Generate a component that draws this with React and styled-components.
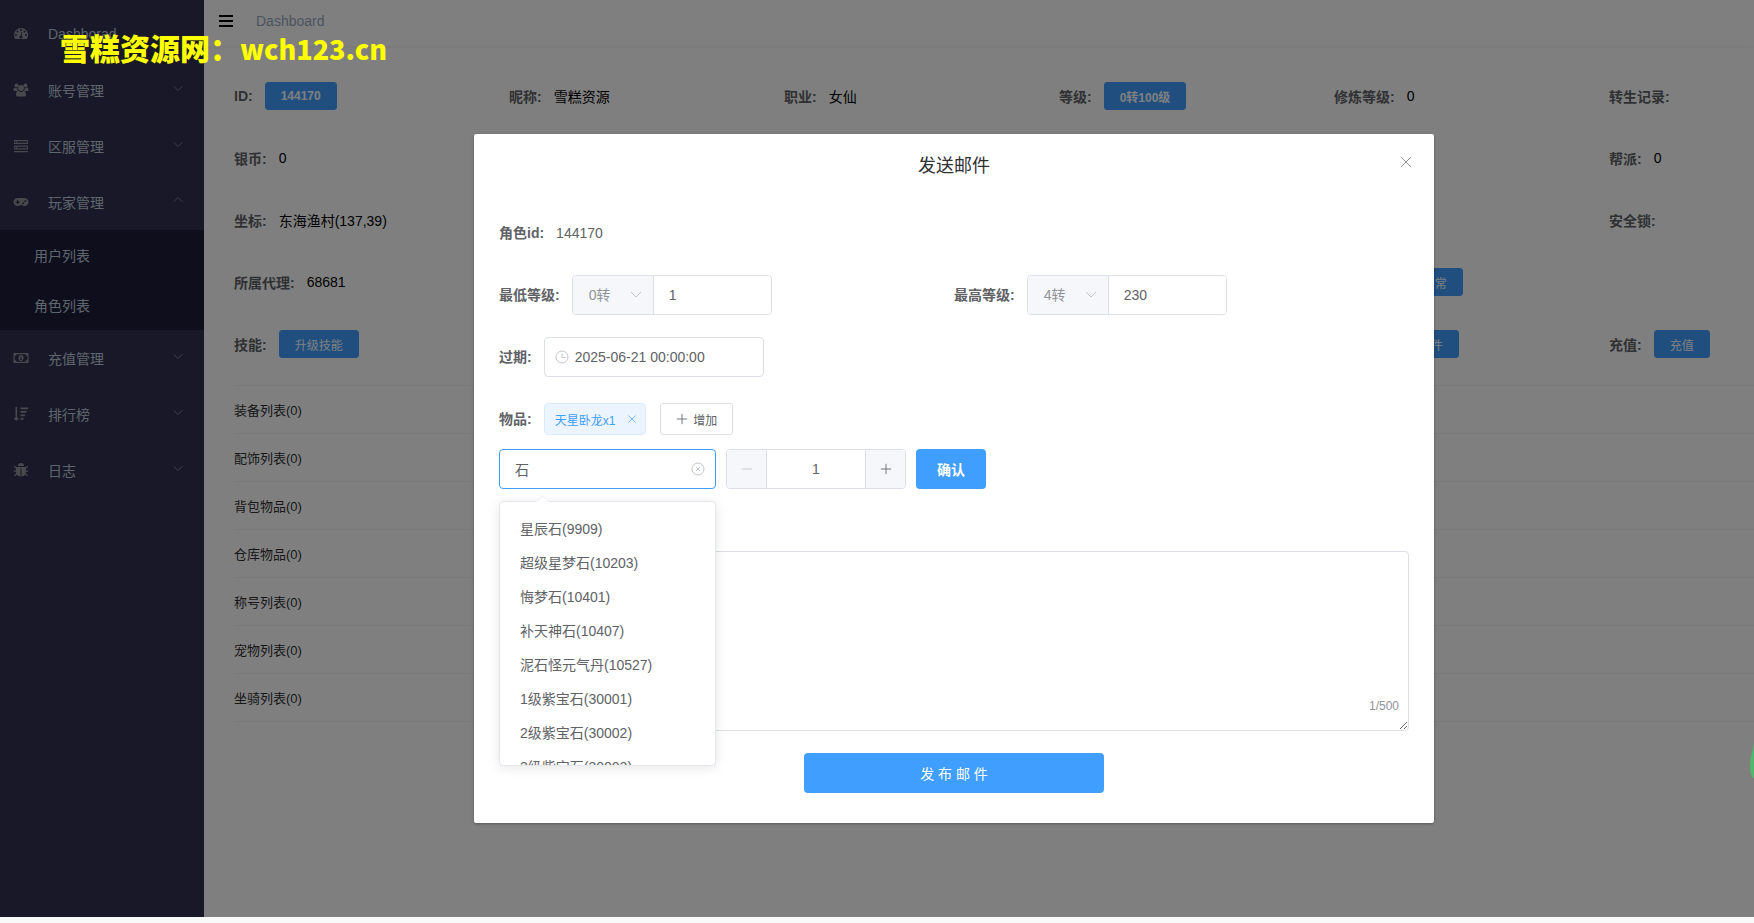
import { useState } from "react";
import styled, { createGlobalStyle } from "styled-components";

const GlobalStyle = createGlobalStyle`
  *,
  *::before,
  *::after {
    box-sizing: border-box;
  }

  body {
    margin: 0;
    background: #f9f9f9;
    font-family: "Liberation Sans", "Noto Sans CJK SC", sans-serif;
    font-size: 14px;
    color: #000000;
  }

  button,
  input,
  select,
  textarea {
    font-family: inherit;
  }
`;

const Page = styled.div`
  position: relative;
  display: flex;
  min-height: 100vh;
  border-bottom: 6px solid #f9f9f9;
  overflow: hidden;
`;

/* ---------- sidebar ---------- */

const Sidebar = styled.nav`
  flex: 0 0 204px;
  padding-top: 6px;
  background: #303050;
`;

const MenuItem = styled.a`
  display: flex;
  align-items: center;
  height: 56px;
  padding: 0 20px 0 13px;
  color: #bfcbd9;
  text-decoration: none;

  span {
    flex: 1;
    margin-left: 19px;
  }
`;

const MenuIconSvg = styled.svg`
  width: 16px;
  height: 16px;
  fill: #909399;
`;

const MenuArrow = styled.div`
  display: flex;
  padding-bottom: 4px;
  color: #8a8fa3;
`;

const SubMenu = styled.div`
  background: #1c1c3a;
`;

const SubMenuItem = styled.a`
  display: flex;
  align-items: center;
  height: 50px;
  padding-left: 34px;
  color: #bfcbd9;
  text-decoration: none;
`;

/* ---------- content ---------- */

const Main = styled.main`
  flex: 1;
  min-width: 0;
  background: #ffffff;
`;

const Header = styled.header`
  display: flex;
  align-items: center;
  gap: 22px;
  height: 46px;
  padding: 0 14px 5px;
  box-shadow: 0 1px 4px rgba(0, 21, 41, 0.06);
`;

const HamburgerButton = styled.button`
  display: flex;
  padding: 0;
  border: 0;
  background: none;
  color: #000000;
`;

const Breadcrumb = styled.a`
  color: #97a8be;
  line-height: 40px;
  text-decoration: none;
`;

const Content = styled.div`
  padding: 30px 0 0 30px;
`;

const InfoGrid = styled.dl`
  display: grid;
  grid-template-columns: repeat(5, 275fr) 145fr;
  grid-auto-rows: 40px;
  row-gap: 22px;
  margin: 0 0 21px;
`;

const InfoCell = styled.div`
  grid-column: ${(props) => props.$col};
  grid-row: ${(props) => props.$row};
  display: flex;
  align-items: center;
  min-width: 0;
  white-space: nowrap;

  dt {
    padding-right: 12px;
    font-weight: 700;
    color: #606266;
  }

  dd {
    display: flex;
    margin: 0;
  }
`;

const MiniButton = styled.button`
  height: 28px;
  padding: 0 15px;
  border: 1px solid #409eff;
  border-radius: 3px;
  background: #409eff;
  color: #ffffff;
  font-size: 12px;
  font-weight: ${(props) => (props.$bold ? 700 : 400)};
`;

const Collapse = styled.div`
  border-top: 1px solid #f1f3f8;
`;

const CollapseHeader = styled.button`
  display: block;
  width: 100%;
  height: 48px;
  padding: 0;
  border: 0;
  border-bottom: 1px solid #f1f3f8;
  background: none;
  color: #303133;
  font-size: 13px;
  text-align: left;
`;

/* ---------- dialog ---------- */

const Overlay = styled.div`
  position: absolute;
  inset: 0;
  display: flex;
  justify-content: center;
  align-items: flex-start;
  padding: 134px 24px 0 178px;
  background: rgba(0, 0, 0, 0.5);
`;

const DialogBox = styled.section`
  width: 100%;
  max-width: 960px;
  border-radius: 2px;
  background: #ffffff;
  box-shadow: 0 1px 3px rgba(0, 0, 0, 0.3);
`;

const DialogHeader = styled.header`
  position: relative;
  padding: 20px 20px 10px;
  text-align: center;
`;

const DialogTitle = styled.h2`
  margin: 0;
  font-size: 18px;
  font-weight: 400;
  line-height: 24px;
  color: #303133;
`;

const DialogClose = styled.button`
  position: absolute;
  top: 21px;
  right: 21px;
  display: flex;
  padding: 0;
  border: 0;
  background: none;
  color: #909399;
`;

const DialogForm = styled.form`
  padding: 25px 25px 30px;
  color: #606266;
`;

const FormRow = styled.div`
  display: grid;
  grid-template-columns: ${(props) => (props.$two ? "1fr 1fr" : "1fr")};
  margin-bottom: 22px;
`;

const FormItem = styled.div`
  display: flex;
  align-items: center;
  height: 40px;
`;

const FormLabel = styled.label`
  padding-right: 12px;
  font-weight: 700;
  line-height: 40px;
  white-space: nowrap;
`;

const LevelGroup = styled.div`
  display: flex;
  width: 200px;
  height: 40px;
  border: 1px solid #dcdfe6;
  border-radius: 4px;
  overflow: hidden;
`;

const SelectWrap = styled.div`
  position: relative;
  flex: 0 0 81px;
  border-right: 1px solid #dcdfe6;
  background: #f5f7fa;
  color: #c0c4cc;

  svg {
    position: absolute;
    top: 11px;
    right: 10px;
    pointer-events: none;
  }
`;

const LevelSelect = styled.select`
  width: 100%;
  height: 100%;
  padding: 0 16px;
  border: 0;
  outline: 0;
  appearance: none;
  background: transparent;
  color: #909399;
  font-size: 14px;
`;

const LevelInput = styled.input`
  flex: 1;
  min-width: 0;
  padding: 0 15px;
  border: 0;
  outline: 0;
  color: #606266;
  font-size: 14px;
`;

const IconInput = styled.div`
  display: flex;
  align-items: center;
  gap: 6px;
  width: ${(props) => props.$width}px;
  height: 40px;
  padding: 0 10px;
  border: 1px solid ${(props) => (props.$active ? "#409eff" : "#dcdfe6")};
  border-radius: 4px;
  color: #c0c4cc;

  input {
    flex: 1;
    min-width: 0;
    padding: 0 0 0 ${(props) => (props.$active ? 5 : 0)}px;
    border: 0;
    outline: 0;
    background: none;
    color: #606266;
    font-size: 14px;
  }

  button {
    display: flex;
    padding: 0;
    border: 0;
    background: none;
    color: inherit;
  }
`;

const Tag = styled.span`
  display: flex;
  align-items: center;
  gap: 12px;
  height: 32px;
  margin-right: 14px;
  padding: 0 8px 0 10px;
  border: 1px solid #d9ecff;
  border-radius: 4px;
  background: #ecf5ff;
  color: #409eff;
  font-size: 12px;

  button {
    display: flex;
    padding: 0;
    border: 0;
    background: none;
    color: inherit;
  }
`;

const AddButton = styled.button`
  display: flex;
  align-items: center;
  gap: 5px;
  height: 32px;
  padding: 0 15px;
  border: 1px solid #dcdfe6;
  border-radius: 3px;
  background: #ffffff;
  color: #606266;
  font-size: 12px;
`;

const PickerRow = styled.div`
  position: relative;
  display: flex;
  gap: 10px;
  margin: -12px 0 22px;
`;

const NumberInput = styled.div`
  display: flex;
  width: 180px;
  height: 40px;
  border: 1px solid #dcdfe6;
  border-radius: 4px;
  overflow: hidden;

  input {
    flex: 1;
    min-width: 0;
    padding: 0;
    border: 0;
    outline: 0;
    color: #606266;
    font-size: 14px;
    text-align: center;
  }
`;

const StepButton = styled.button`
  display: flex;
  flex: 0 0 40px;
  align-items: center;
  justify-content: center;
  padding: 0;
  border: 0 solid #dcdfe6;
  border-width: ${(props) => (props.$side === "left" ? "0 1px 0 0" : "0 0 0 1px")};
  background: #f5f7fa;
  color: #606266;

  &:disabled {
    color: #c0c4cc;
  }
`;

const PrimaryButton = styled.button`
  display: block;
  width: ${(props) => props.$width}px;
  height: 40px;
  padding: 0;
  border: 0;
  border-radius: 4px;
  background: #409eff;
  color: #ffffff;
  font-size: 14px;
  font-weight: ${(props) => (props.$bold ? 700 : 400)};
`;

const Suggestions = styled.div`
  position: absolute;
  z-index: 2;
  top: 52px;
  left: 0;
  width: 217px;
  height: 265px;
  border: 1px solid #e4e7ed;
  border-radius: 4px;
  background: #ffffff;
  box-shadow: 0 2px 12px rgba(0, 0, 0, 0.1);

  &::before {
    content: "";
    position: absolute;
    top: -5px;
    left: 38px;
    width: 9px;
    height: 9px;
    background: #ffffff;
    border: 1px solid #ebeef5;
    border-right-color: transparent;
    border-bottom-color: transparent;
    transform: rotate(45deg);
  }

  ul {
    height: 100%;
    margin: 0;
    padding: 10px 0;
    list-style: none;
    overflow: hidden;
  }

  li {
    padding: 0 20px;
    line-height: 34px;
  }
`;

const TextareaWrap = styled.div`
  position: relative;
  height: 180px;
  margin-bottom: 22px;

  textarea {
    display: block;
    width: 100%;
    height: 100%;
    padding: 5px 15px;
    border: 1px solid #dcdfe6;
    border-radius: 4px;
    outline: 0;
    resize: vertical;
    color: #606266;
    font-size: 14px;
    line-height: 21px;
  }

  span {
    position: absolute;
    right: 10px;
    bottom: 16px;
    font-size: 12px;
    line-height: 18px;
    color: #909399;
  }
`;

const Actions = styled.div`
  display: flex;
  justify-content: center;
`;

const Watermark = styled.div`
  position: absolute;
  top: 26px;
  left: 60px;
  color: #ffff00;
  font-family: "Noto Sans CJK SC", sans-serif;
  font-size: 30px;
  font-weight: 900;
  line-height: 42px;
  white-space: nowrap;

  span {
    font-size: 27px;
  }
`;

const FloatBall = styled.svg`
  position: absolute;
  right: 0;
  top: 740px;
  width: 4px;
  height: 38px;
  fill: #50b869;
`;

/* ---------- icons ---------- */

const lineIcons = {
  down: "M2 5l5 5 5-5",
  up: "M2 9l5-5 5 5",
  close: "M2 2l10 10M12 2L2 12",
  plus: "M1 7h12M7 1v12",
  minus: "M1 7h12",
  clock: "M7 1a6 6 0 1 0 0 12a6 6 0 1 0 0-12M7 3.500v4h3.500",
  clear: "M7 1a6 6 0 1 0 0 12a6 6 0 1 0 0-12M5 5l4 4M9 5l-4 4",
};

const LineIcon = ({ name, size = 14 }) => (
  <svg
    width={size}
    height={size}
    viewBox="0 0 14 14"
    fill="none"
    stroke="currentColor"
    strokeWidth="1"
    aria-hidden="true"
  >
    <path d={lineIcons[name]} />
  </svg>
);

const menuIcons = {
  dashboard:
    "M8 2a7 7 0 0 0-7 7c0 1.500.4 2.700 1.100 3.800.2.200.4.200.6.200h10.600c.2 0 .4 0 .6-.2A7 7 0 0 0 8 2zM3 10a1 1 0 1 1 0-2 1 1 0 0 1 0 2zm1.500-3.500a1 1 0 1 1 0-2 1 1 0 0 1 0 2zM8 5a1 1 0 1 1 0-2 1 1 0 0 1 0 2zm1.300 5.500a1.500 1.500 0 1 1-1.600-1l.9-3.600.8.200-.9 3.600c.4.200.7.400.8.800zM11.500 6.500a1 1 0 1 1 0-2 1 1 0 0 1 0 2zM13 10a1 1 0 1 1 0-2 1 1 0 0 1 0 2z",
  users:
    "M3.500 1.500a2 2 0 1 1 0 4 2 2 0 0 1 0-4zM12.500 1.500a2 2 0 1 1 0 4 2 2 0 0 1 0-4zM8 3a3 3 0 1 1 0 6 3 3 0 0 1 0-6zM.5 8.500c0-1.500.3-3 1.300-3 .5.5 1.500.8 2.500.5-.2 1.300.2 2.300.8 3H1.700c-.7 0-1.200-.2-1.200-.5zM15.500 8.500c0-1.500-.3-3-1.300-3-.5.5-1.500.8-2.500.5.2 1.300-.2 2.300-.8 3h3.400c.7 0 1.200-.2 1.200-.5zM3 13c0-2.300.6-4.300 2.300-4.300C7 10.300 9 10.300 10.700 8.700 12.400 8.700 13 10.700 13 13c0 1-.7 1.500-1.600 1.500H4.600C3.700 14.500 3 14 3 13z",
  server:
    "M1 2h14v1.200H1zM1 4.800h14V6H1zM1 7.500h14v1.200H1zM1 10.200h14v1.200H1zM1 13h14v1.200H1zM1 3h1v2H1zM14 3h1v2h-1zM3 3h1v2H3zM1 8.500h1v2H1zM3 8.500h1v2H3zM14 8.500h1v2h-1z",
  gamepad:
    "M4.500 4a4 4 0 1 0 2.700 7h1.600a4 4 0 1 0 2.700-7zM4 6h1.200v1.500h1.500v1.200H5.200v1.500H4V8.700H2.500V7.500H4zM10.200 8.200a1 1 0 1 1 0 2 1 1 0 0 1 0-2zM12.300 6a1 1 0 1 1 0 2 1 1 0 0 1 0-2z",
  money:
    "M.5 3h15v10H.5zM3.500 4.200A2 2 0 0 1 1.700 6v4a2 2 0 0 1 1.800 1.800h9A2 2 0 0 1 14.300 10V6a2 2 0 0 1-1.800-1.800zM8 5c1.600 0 2.500 1.400 2.500 3S9.600 11 8 11 5.500 9.600 5.500 8 6.400 5 8 5zM7 6.500v.8h.6v1.900H7v.7h2v-.7h-.6V6.500z",
  sort:
    "M2.500 1h1.600v11h1.900L3.300 15 .6 12h1.900zM7.500 1.500H15v1.700H7.500zM7.500 5h6v1.700h-6zM7.500 8.500H12v1.700H7.500zM7.500 12h3v1.700h-3z",
  bug:
    "M5 4a3 3 0 0 1 6 0zM3.500 5h9c.2 0 .3.100.4.200l1.600-1.600.8.800L13 6.700v1.800h2.200v1.200H13c0 .6-.1 1.100-.3 1.600l2.300 2.300-.8.800-2-2c-.9 1.100-2.200 1.900-3.700 2.100V6.500h-1v8c-1.500-.2-2.800-1-3.700-2.100l-2 2-.8-.8 2.300-2.300C3.100 10.800 3 10.300 3 9.700H.8V8.500H3V6.700L.7 4.400l.8-.8 1.600 1.600c.1-.1.200-.2.400-.2z",
};

const MenuIcon = ({ name }) => (
  <MenuIconSvg viewBox="0 0 16 16" fillRule="evenodd" aria-hidden="true">
    <path d={menuIcons[name]} />
  </MenuIconSvg>
);

/* ---------- data ---------- */

const menu = [
  { icon: "dashboard", title: "Dashborad" },
  { icon: "users", title: "账号管理", arrow: "down" },
  { icon: "server", title: "区服管理", arrow: "down" },
  {
    icon: "gamepad",
    title: "玩家管理",
    arrow: "up",
    children: ["用户列表", "角色列表"],
  },
  { icon: "money", title: "充值管理", arrow: "down" },
  { icon: "sort", title: "排行榜", arrow: "down" },
  { icon: "bug", title: "日志", arrow: "down" },
];

const info = [
  { row: 1, col: 1, label: "ID", button: "144170", bold: true },
  { row: 1, col: 2, label: "昵称", value: "雪糕资源" },
  { row: 1, col: 3, label: "职业", value: "女仙" },
  { row: 1, col: 4, label: "等级", button: "0转100级", bold: true },
  { row: 1, col: 5, label: "修炼等级", value: "0" },
  { row: 1, col: 6, label: "转生记录" },
  { row: 2, col: 1, label: "银币", value: "0" },
  { row: 2, col: 6, label: "帮派", value: "0" },
  { row: 3, col: 1, label: "坐标", value: "东海渔村(137,39)" },
  { row: 3, col: 6, label: "安全锁" },
  { row: 4, col: 1, label: "所属代理", value: "68681" },
  { row: 4, col: 5, label: "账号状态", button: "正常" },
  { row: 5, col: 1, label: "技能", button: "升级技能" },
  { row: 5, col: 5, label: "邮件", button: "发送邮件" },
  { row: 5, col: 6, label: "充值", button: "充值" },
];

const lists = [
  "装备列表(0)",
  "配饰列表(0)",
  "背包物品(0)",
  "仓库物品(0)",
  "称号列表(0)",
  "宠物列表(0)",
  "坐骑列表(0)",
];

const suggestions = [
  "星辰石(9909)",
  "超级星梦石(10203)",
  "悔梦石(10401)",
  "补天神石(10407)",
  "泥石怪元气丹(10527)",
  "1级紫宝石(30001)",
  "2级紫宝石(30002)",
  "3级紫宝石(30003)",
];

const turns = ["0转", "1转", "2转", "3转", "4转"];

/* ---------- parts ---------- */

const LevelField = ({ id, label, turn, level }) => (
  <FormItem>
    <FormLabel htmlFor={id}>{label}:</FormLabel>
    <LevelGroup>
      <SelectWrap>
        <LevelSelect defaultValue={turn} aria-label={`${label}转数`}>
          {turns.map((item) => (
            <option key={item}>{item}</option>
          ))}
        </LevelSelect>
        <LineIcon name="down" />
      </SelectWrap>
      <LevelInput id={id} defaultValue={level} />
    </LevelGroup>
  </FormItem>
);

const SideMenu = () => (
  <Sidebar>
    {menu.map(({ icon, title, arrow, children }) => (
      <div key={title}>
        <MenuItem href="#">
          <MenuIcon name={icon} />
          <span>{title}</span>
          {arrow && (
            <MenuArrow>
              <LineIcon name={arrow} size={12} />
            </MenuArrow>
          )}
        </MenuItem>
        {children && (
          <SubMenu>
            {children.map((item) => (
              <SubMenuItem href="#" key={item}>
                {item}
              </SubMenuItem>
            ))}
          </SubMenu>
        )}
      </div>
    ))}
  </Sidebar>
);

const MailDialog = () => {
  const [keyword, setKeyword] = useState("石");
  const [count, setCount] = useState(1);
  const [content, setContent] = useState(" ");

  return (
    <Overlay>
      <DialogBox role="dialog" aria-labelledby="mail-title">
        <DialogHeader>
          <DialogTitle id="mail-title">发送邮件</DialogTitle>
          <DialogClose type="button" aria-label="关闭">
            <LineIcon name="close" />
          </DialogClose>
        </DialogHeader>
        <DialogForm onSubmit={(e) => e.preventDefault()}>
          <FormRow>
            <FormItem>
              <FormLabel as="span">角色id:</FormLabel>
              <span>144170</span>
            </FormItem>
          </FormRow>
          <FormRow $two>
            <LevelField id="min-level" label="最低等级" turn="0转" level="1" />
            <LevelField id="max-level" label="最高等级" turn="4转" level="230" />
          </FormRow>
          <FormRow>
            <FormItem>
              <FormLabel htmlFor="expire">过期:</FormLabel>
              <IconInput $width={220}>
                <LineIcon name="clock" />
                <input id="expire" defaultValue="2025-06-21 00:00:00" />
              </IconInput>
            </FormItem>
          </FormRow>
          <FormRow>
            <FormItem>
              <FormLabel htmlFor="goods">物品:</FormLabel>
              <Tag>
                天星卧龙x1
                <button type="button" aria-label="移除">
                  <LineIcon name="close" size={10} />
                </button>
              </Tag>
              <AddButton type="button">
                <LineIcon name="plus" size={12} />
                增加
              </AddButton>
            </FormItem>
          </FormRow>
          <PickerRow>
            <IconInput $width={217} $active>
              <input
                id="goods"
                value={keyword}
                onChange={(e) => setKeyword(e.target.value)}
              />
              <button
                type="button"
                aria-label="清空"
                onClick={() => setKeyword("")}
              >
                <LineIcon name="clear" />
              </button>
            </IconInput>
            <NumberInput>
              <StepButton
                type="button"
                $side="left"
                aria-label="减少"
                disabled={count <= 1}
                onClick={() => setCount(count - 1)}
              >
                <LineIcon name="minus" size={12} />
              </StepButton>
              <input aria-label="数量" value={count} readOnly />
              <StepButton
                type="button"
                $side="right"
                aria-label="增加数量"
                onClick={() => setCount(count + 1)}
              >
                <LineIcon name="plus" size={12} />
              </StepButton>
            </NumberInput>
            <PrimaryButton type="button" $width={70} $bold>
              确认
            </PrimaryButton>
            <Suggestions>
              <ul>
                {suggestions.map((item) => (
                  <li key={item}>{item}</li>
                ))}
              </ul>
            </Suggestions>
          </PickerRow>
          <FormItem>
            <FormLabel htmlFor="content">内容:</FormLabel>
          </FormItem>
          <TextareaWrap>
            <textarea
              id="content"
              value={content}
              maxLength={500}
              onChange={(e) => setContent(e.target.value)}
            />
            <span>{content.length}/500</span>
          </TextareaWrap>
          <Actions>
            <PrimaryButton type="submit" $width={300}>
              发 布 邮 件
            </PrimaryButton>
          </Actions>
        </DialogForm>
      </DialogBox>
    </Overlay>
  );
};

const App = () => {
  return (
    <>
      <GlobalStyle />
      <Page>
        <SideMenu />
        <Main>
          <Header>
            <HamburgerButton type="button" aria-label="菜单">
              <svg width="16" height="14" viewBox="0 0 16 14">
                <path d="M1 1h14v2H1zM1 6h14v2H1zM1 11h14v2H1z" />
              </svg>
            </HamburgerButton>
            <Breadcrumb href="#">Dashboard</Breadcrumb>
          </Header>
          <Content>
            <InfoGrid>
              {info.map(({ row, col, label, value, button, bold }) => (
                <InfoCell key={label} $row={row} $col={col}>
                  <dt>{label}:</dt>
                  <dd>
                    {button ? (
                      <MiniButton type="button" $bold={bold}>
                        {button}
                      </MiniButton>
                    ) : (
                      value
                    )}
                  </dd>
                </InfoCell>
              ))}
            </InfoGrid>
            <Collapse>
              {lists.map((item) => (
                <CollapseHeader type="button" key={item}>
                  {item}
                </CollapseHeader>
              ))}
            </Collapse>
          </Content>
        </Main>
        <MailDialog />
        <FloatBall viewBox="0 0 4 38" aria-hidden="true">
          <path d="M4 3C3 10 0 17 0 25c0 6 1 10 3 13h1z" />
        </FloatBall>
        <Watermark>
          雪糕资源网：<span>wch123.cn</span>
        </Watermark>
      </Page>
    </>
  );
};

export default App;
